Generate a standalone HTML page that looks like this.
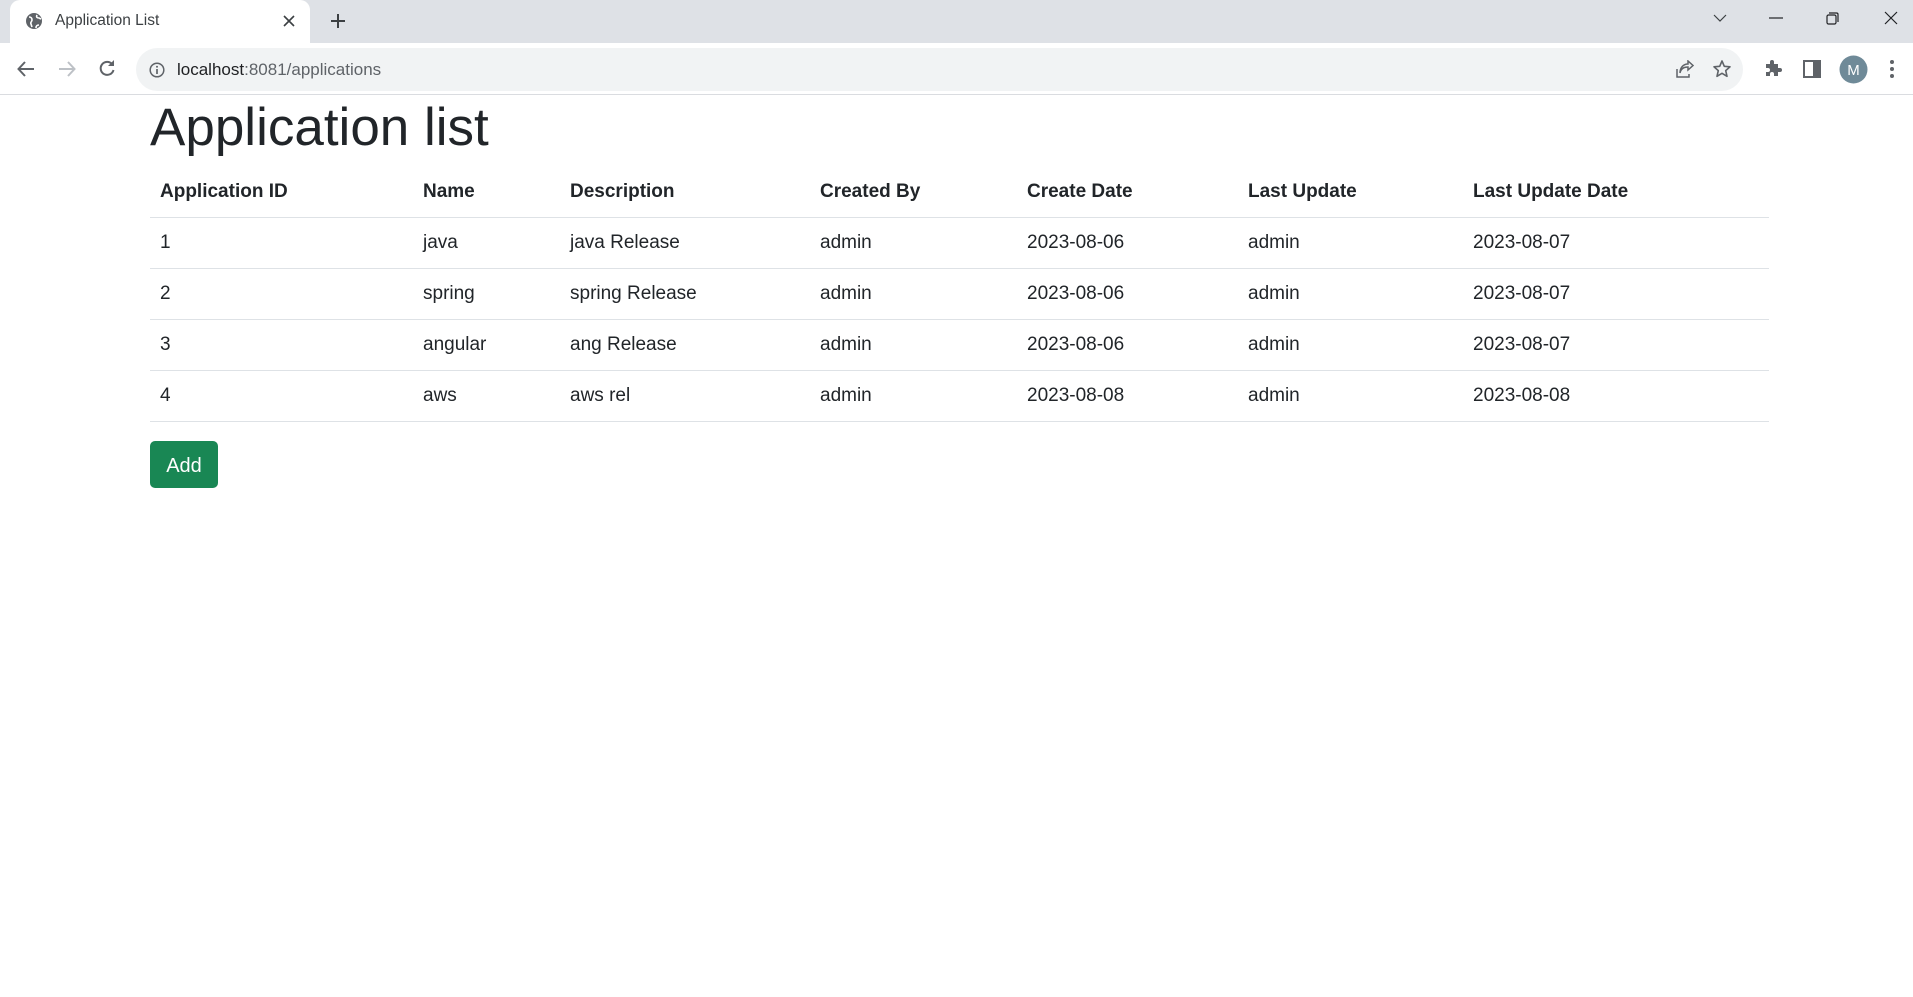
<!DOCTYPE html>
<html><head><meta charset="utf-8"><style>
*{box-sizing:border-box;margin:0;padding:0}
body{width:1913px;height:997px;overflow:hidden;background:#fff;font-family:"Liberation Sans",sans-serif;color:#212529;position:relative}
.tabbar{position:absolute;left:0;top:0;width:1913px;height:43px;background:#dee1e6}
.tab{position:absolute;left:10px;top:0;width:300px;height:43px;background:#fff;border-radius:10px 10px 0 0}
.tab .t{position:absolute;left:45px;top:12px;font-size:15.5px;color:#3c4043}
.toolbar{position:absolute;left:0;top:43px;width:1913px;height:52px;background:#fff;border-bottom:1px solid #dadce0}
.omni{position:absolute;left:136px;top:5px;width:1607px;height:43px;background:#f1f3f4;border-radius:22px}
.omni .u{position:absolute;left:41px;top:12px;font-size:17px;color:#202124}
.omni .u span{color:#5f6368}
svg{position:absolute}
h1{position:absolute;left:150px;top:96px;font-size:53px;font-weight:400;line-height:64px}
table{position:absolute;left:150px;top:167px;width:1619px;border-collapse:collapse;font-size:19px}
th,td{text-align:left;padding:10px 10px;height:51px;border-bottom:1px solid #dee2e6;line-height:30px}
th{font-weight:700;height:50px}
.btn{position:absolute;left:150px;top:441px;width:68px;height:47px;background:#198754;border-radius:5px;color:#fff;font-size:20px;text-align:center;line-height:50px}
</style></head><body>
<div class="tabbar">
<div class="tab">
<svg style="left:15px;top:12px" width="18" height="18" viewBox="0 0 18 18"><circle cx="9" cy="9" r="8" fill="#5f6368"/><path d="M4 5c2 0 3 1 3 3s-2 2-1 4l1 3M12 3c-1 2 0 3 2 3l2 1M11 16c0-2 1-3 3-3" stroke="#fff" stroke-width="1.6" fill="none"/></svg>
<div class="t">Application List</div>
<svg style="left:273px;top:15px" width="12" height="12" viewBox="0 0 12 12"><path d="M1 1L11 11M11 1L1 11" stroke="#3c4043" stroke-width="1.6"/></svg>
</div>
<svg style="left:330px;top:13px" width="16" height="16" viewBox="0 0 16 16"><path d="M8 1V15M1 8H15" stroke="#3c4043" stroke-width="2"/></svg>
<svg style="left:1713px;top:13px" width="14" height="10" viewBox="0 0 14 10"><path d="M1 2L7 8L13 2" stroke="#3c4043" stroke-width="1.2" fill="none"/></svg>
<svg style="left:1769px;top:17px" width="14" height="2" viewBox="0 0 14 2"><path d="M0 1H14" stroke="#202124" stroke-width="1.2"/></svg>
<svg style="left:1826px;top:12px" width="13" height="13" viewBox="0 0 13 13"><rect x="1" y="3" width="9" height="9" rx="1.5" stroke="#202124" fill="none" stroke-width="1.2"/><path d="M3 1H10.5Q12 1 12 2.5V10" stroke="#202124" fill="none" stroke-width="1.2"/></svg>
<svg style="left:1884px;top:11px" width="14" height="14" viewBox="0 0 14 14"><path d="M1 1L13 13M13 1L1 13" stroke="#202124" stroke-width="1.2"/></svg>
</div>
<div class="toolbar">
<svg style="left:17px;top:17px" width="18" height="18" viewBox="0 0 18 18"><path d="M17 9H2M8 2L1.5 9L8 16" stroke="#5f6368" stroke-width="2" fill="none"/></svg>
<svg style="left:58px;top:17px" width="18" height="18" viewBox="0 0 18 18"><path d="M1 9H16M10 2L16.5 9L10 16" stroke="#bdc1c6" stroke-width="2" fill="none"/></svg>
<svg style="left:98px;top:16px" width="19" height="19" viewBox="0 0 19 19"><path d="M15.5 11A6.5 6.5 0 1 1 14 5" stroke="#5f6368" stroke-width="2" fill="none"/><path d="M16 1V7H10Z" fill="#5f6368"/></svg>
<div class="omni">
<svg style="left:13px;top:14px" width="16" height="16" viewBox="0 0 16 16"><circle cx="8" cy="8" r="6.8" stroke="#5f6368" stroke-width="1.5" fill="none"/><path d="M8 7V12" stroke="#5f6368" stroke-width="1.7"/><circle cx="8" cy="4.7" r="1" fill="#5f6368"/></svg>
<div class="u">localhost<span>:8081/applications</span></div>
<svg style="left:1538px;top:12px" width="20" height="20" viewBox="0 0 20 20"><path d="M3 9V17H15V14M6 13C7 8 11 7 14 7V10L19 5.5L14 1V4C9 4 6 8 6 13Z" stroke="#5f6368" stroke-width="1.5" fill="none"/></svg>
<svg style="left:1576px;top:11px" width="20" height="20" viewBox="0 0 20 20"><path d="M10 2L12.3 7.3L18 7.8L13.7 11.6L15 17.3L10 14.3L5 17.3L6.3 11.6L2 7.8L7.7 7.3Z" stroke="#5f6368" stroke-width="1.6" fill="none" stroke-linejoin="round"/></svg>
</div>
<svg style="left:1763px;top:16px" width="19" height="19" viewBox="0 0 19 19"><path d="M3 5H7V3A2 2 0 0 1 11 3V5H15V9H17A2 2 0 0 1 17 13H15V17H11V15A2 2 0 0 0 7 15V17H3V13H5A2 2 0 0 0 5 9H3Z" fill="#5f6368"/></svg>
<svg style="left:1803px;top:17px" width="18" height="18" viewBox="0 0 18 18"><rect x="1" y="1" width="16" height="16" stroke="#5f6368" stroke-width="2" fill="none"/><rect x="10" y="1" width="7" height="16" fill="#5f6368"/></svg>
<svg style="left:1839px;top:12px" width="29" height="29" viewBox="0 0 29 29"><circle cx="14.5" cy="14.5" r="14" fill="#6f8a98"/><text x="14.5" y="20" text-anchor="middle" font-family="Liberation Sans" font-size="15" fill="#fff">M</text></svg>
<svg style="left:1889px;top:16px" width="6" height="20" viewBox="0 0 6 20"><circle cx="3" cy="3" r="2" fill="#5f6368"/><circle cx="3" cy="10" r="2" fill="#5f6368"/><circle cx="3" cy="17" r="2" fill="#5f6368"/></svg>
</div>
<h1>Application list</h1>
<table>
<colgroup><col style="width:263px"><col style="width:147px"><col style="width:250px"><col style="width:207px"><col style="width:221px"><col style="width:225px"><col></colgroup>
<tr><th>Application ID</th><th>Name</th><th>Description</th><th>Created By</th><th>Create Date</th><th>Last Update</th><th>Last Update Date</th></tr>
<tr><td>1</td><td>java</td><td>java Release</td><td>admin</td><td>2023-08-06</td><td>admin</td><td>2023-08-07</td></tr>
<tr><td>2</td><td>spring</td><td>spring Release</td><td>admin</td><td>2023-08-06</td><td>admin</td><td>2023-08-07</td></tr>
<tr><td>3</td><td>angular</td><td>ang Release</td><td>admin</td><td>2023-08-06</td><td>admin</td><td>2023-08-07</td></tr>
<tr><td>4</td><td>aws</td><td>aws rel</td><td>admin</td><td>2023-08-08</td><td>admin</td><td>2023-08-08</td></tr>
</table>
<div class="btn">Add</div>
</body></html>
